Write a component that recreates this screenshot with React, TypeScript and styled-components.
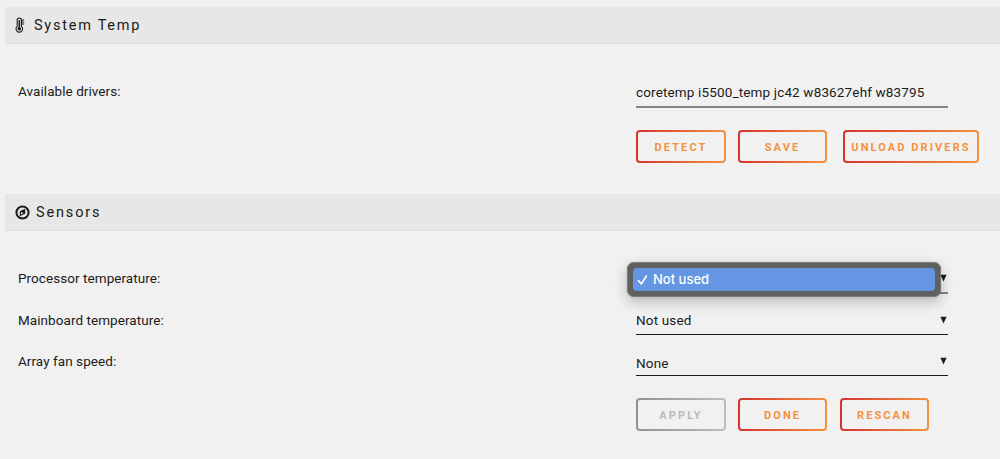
import React from "react"
import styled, { createGlobalStyle } from "styled-components"

const theme = {
  page: "#f1f1f1",
  bar: "#e7e7e7",
  text: "#1c1b1b",
  red: "#d5332e",
  orange: "#f4913f",
}

const GlobalStyle = createGlobalStyle`
  * { box-sizing: border-box; }
  body {
    margin: 0;
    background: ${theme.page};
    color: ${theme.text};
    font: 13.5px/20px Roboto, "Open Sans", sans-serif;
  }
`

const Page = styled.main`
  width: 1000px;
  height: 459px;
  padding: 7px 0 0 5px;
  overflow: hidden;
`

const TitleBar = styled.h2<{ $gap: number; $spacing: number }>`
  display: flex;
  align-items: center;
  gap: ${p => p.$gap}px;
  height: 37px;
  margin: 0;
  padding: 0 0 0 10px;
  background: ${theme.bar};
  border-bottom: 1px solid #dfdfdf;
  font-size: 14.5px;
  font-weight: 400;
  letter-spacing: ${p => p.$spacing}px;
  svg { display: block; flex: none; }
  span { padding-top: 2px; }
`

const Section = styled.section<{ $height: number }>`
  height: ${p => p.$height}px;
`

const Row = styled.div<{ $top: number }>`
  display: grid;
  grid-template-columns: 618px 312px;
  align-items: start;
  padding: ${p => p.$top}px 0 0 13px;
`

const Label = styled.label`
  letter-spacing: 0.06px;
`

const Field = styled.div<{ $height: number; $soft?: boolean; $drop?: number }>`
  position: relative;
  display: flex;
  justify-content: space-between;
  height: ${p => p.$height}px;
  border-bottom: ${p => (p.$soft ? "2px solid #858585" : `1px solid ${theme.text}`)};
  letter-spacing: 0.15px;
  white-space: nowrap;
  span { padding-top: ${p => p.$drop || 0}px; }
`

const Arrow = styled.svg`
  display: block;
  width: 7px;
  height: 8px;
  margin: 6px 1px 0 0;
`

const Menu = styled.div`
  position: absolute;
  left: -9px;
  top: -6px;
  width: 314px;
  height: 35px;
  padding: 5px;
  background: #606060;
  border: 1px solid #7c7c7c;
  border-radius: 7px;
  box-shadow: 0 0 1px rgba(0, 0, 0, 0.4), 0 5px 14px rgba(0, 0, 0, 0.24);
`

const MenuItem = styled.div`
  display: flex;
  align-items: center;
  gap: 5px;
  height: 23px;
  padding-left: 4px;
  border-radius: 4px;
  background: #6496e3;
  color: #fff;
  font: 500 13px/23px Inter, sans-serif;
  letter-spacing: 0;
`

const Actions = styled.div<{ $top: number }>`
  display: flex;
  gap: 12px;
  padding: ${p => p.$top}px 0 0 631px;
`

const Button = styled.button<{ $width?: number; $before?: number }>`
  width: ${p => p.$width || 89}px;
  height: 33px;
  margin: 0 0 0 ${p => p.$before || 0}px;
  padding: 2px 0 0;
  border: 2px solid transparent;
  border-radius: 4px;
  background:
    linear-gradient(${theme.page}, ${theme.page}) padding-box,
    linear-gradient(90deg, ${theme.red}, ${theme.orange}) border-box;
  color: ${theme.orange};
  font: 700 11px/27px Roboto, sans-serif;
  letter-spacing: 2.1px;
  text-transform: uppercase;
  white-space: nowrap;
  &:disabled {
    background:
      linear-gradient(${theme.page}, ${theme.page}) padding-box,
      linear-gradient(90deg, #929292, #bdbdbd) border-box;
    color: #b9b9b9;
  }
`

const Thermometer = () => (
  <svg width="12" height="16" viewBox="0 0 12 16" fill="none" stroke={theme.text}>
    <path d="M2.2 9.3V3.1a2.1 2.1 0 0 1 4.2 0v6.2a3.3 3.3 0 1 1-4.2 0z" strokeWidth="1.1" />
    <path d="M4.3 3.2v8" strokeWidth="1.5" />
    <circle cx="4.3" cy="11.8" r="1.8" fill={theme.text} stroke="none" />
    <path d="M6.6 3h2.6M6.6 5h2.6M6.6 7h2.6" strokeWidth="1" />
  </svg>
)

const Compass = () => (
  <svg width="15" height="16" viewBox="0 0 15 16" fill="none" stroke={theme.text}>
    <circle cx="7.5" cy="8.5" r="6.1" strokeWidth="2" />
    <path d="M10.2 4.8v5L4.8 12.2v-5z" fill={theme.text} stroke="none" />
    <path d="M6 8.1v2.3l2.5-1.2z" fill={theme.bar} stroke="none" />
  </svg>
)

const DownArrow = () => (
  <Arrow viewBox="0 0 7 8"><path d="M.4.7h6.2L3.5 7.5z" fill={theme.text} /></Arrow>
)

export default () => (
  <>
    <GlobalStyle />
    <Page>
      <Section $height={187}>
        <TitleBar $gap={7} $spacing={1.75}><Thermometer /><span>System Temp</span></TitleBar>
        <Row $top={37}>
          <Label>Available drivers:</Label>
          <Field $height={27} $drop={1} $soft>
            <span>coretemp i5500_temp jc42 w83627ehf w83795</span>
          </Field>
        </Row>
        <Actions $top={22}>
          <Button $width={90}>Detect</Button>
          <Button>Save</Button>
          <Button $width={136} $before={4}>Unload drivers</Button>
        </Actions>
      </Section>

      <Section $height={258}>
        <TitleBar $gap={6} $spacing={1.85}><Compass /><span>Sensors</span></TitleBar>
        <Row $top={37}>
          <Label>Processor temperature:</Label>
          <Field $height={26} $soft>
            <span />
            <DownArrow />
            <Menu>
              <MenuItem>
                <svg width="11" height="12" viewBox="0 0 11 12" fill="none">
                  <path d="M1.4 6.5 4.3 10 9.4 2" stroke="#fff" strokeWidth="1.6" strokeLinecap="round" strokeLinejoin="round" />
                </svg>
                Not used
              </MenuItem>
            </Menu>
          </Field>
        </Row>
        <Row $top={16}>
          <Label>Mainboard temperature:</Label>
          <Field $height={25}><span>Not used</span><DownArrow /></Field>
        </Row>
        <Row $top={16}>
          <Label>Array fan speed:</Label>
          <Field $height={25} $drop={2}><span>None</span><DownArrow /></Field>
        </Row>
        <Actions $top={22}>
          <Button $width={90} disabled>Apply</Button>
          <Button>Done</Button>
          <Button $before={1}>Rescan</Button>
        </Actions>
      </Section>
    </Page>
  </>
)
